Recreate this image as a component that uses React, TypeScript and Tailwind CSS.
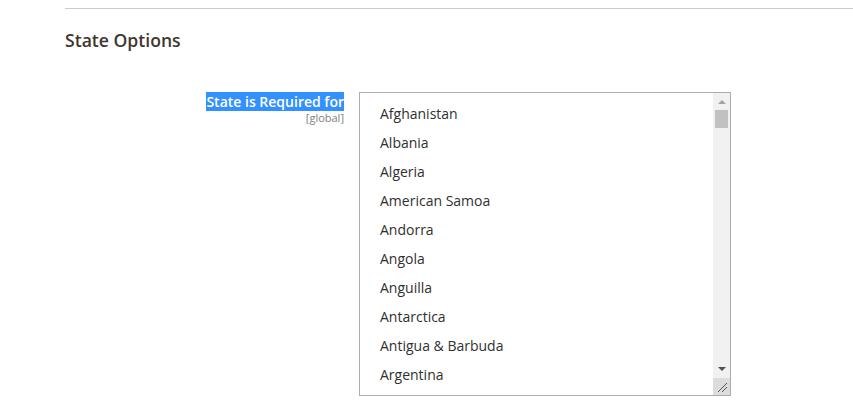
const countries = [
  "Afghanistan",
  "Albania",
  "Algeria",
  "American Samoa",
  "Andorra",
  "Angola",
  "Anguilla",
  "Antarctica",
  "Antigua & Barbuda",
  "Argentina",
];

const Scrollbar = () => (
  <div className="flex w-[17px] shrink-0 flex-col bg-[#f1f1f1]">
    {/* up arrow */}
    <div className="flex h-[17px] items-center justify-center">
      <svg width="8" height="5" viewBox="0 0 8 5">
        <path d="M0 5 L4 1 L8 5 Z" fill="#a3a3a3" />
      </svg>
    </div>
    {/* thumb */}
    <div className="mx-[2px] h-[18px] bg-[#c1c1c1]" />
    <div className="flex-1" />
    {/* down arrow */}
    <div className="flex h-[17px] items-center justify-center">
      <svg width="8" height="5" viewBox="0 0 8 5">
        <path d="M0 0 L8 0 L4 4 Z" fill="#505050" />
      </svg>
    </div>
    {/* resize corner */}
    <div className="flex h-[17px] items-end justify-end bg-[#dcdcdc] pb-[2px] pr-[2px]">
      <svg width="11" height="11" viewBox="0 0 11 11">
        <path d="M1 10 L10 1 M5 10 L10 5" stroke="#555" strokeWidth="1" />
      </svg>
    </div>
  </div>
);

export default function App() {
  return (
    <div className="min-h-[418px] bg-white pl-[65px] pt-2 font-['Open_Sans',sans-serif]">
      <div className="border-t border-[#cccccc]" />
      <h2 className="mt-[20px] text-[17.6px] font-semibold leading-[22px] text-[#41362f]">
        State Options
      </h2>

      <div className="mt-[41px] flex">
        <div className="flex w-[279px] flex-col items-end">
          <span className="bg-[#3390ff] text-[14px] font-semibold leading-[19px] text-white">
            State is Required for
          </span>
          <span className="mt-[1px] text-[11px] leading-[11px] text-[#808080]">
            [global]
          </span>
        </div>

        <div className="ml-[15px] flex h-[304px] w-[372px] border border-[#adadad] bg-white">
          <ul className="flex-1 overflow-hidden pt-[6px]">
            {countries.map((c) => (
              <li
                key={c}
                className="h-[29px] pl-[20px] text-[14px] leading-[29px] text-[#303030]"
              >
                {c}
              </li>
            ))}
          </ul>
          <Scrollbar />
        </div>
      </div>
    </div>
  );
}
